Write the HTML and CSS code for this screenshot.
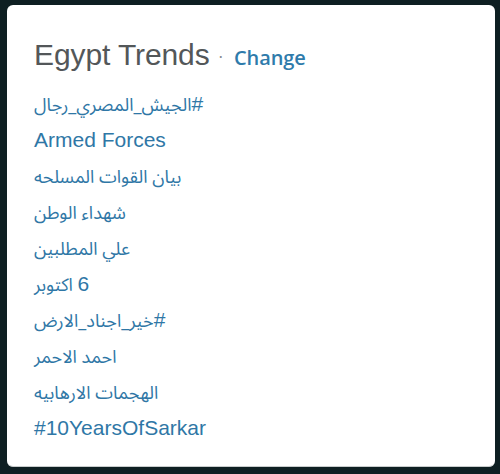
FILE: index.html
```html
<!DOCTYPE html>
<html lang="en">
<head>
<meta charset="utf-8">
<title>Egypt Trends</title>
<link rel="stylesheet" href="styles.css">
</head>
<body>
<div class="card">
  <h2 class="title">Egypt Trends <span class="sep">·</span> <a class="change" href="#">Change</a></h2>
  <ul class="trends">
    <li><a class="ar" href="#" dir="auto"><span class="hash">#</span>الجيش_المصري_رجال</a></li>
    <li><a href="#" dir="auto">Armed Forces</a></li>
    <li><a class="ar" href="#" dir="auto">بيان القوات المسلحه</a></li>
    <li><a class="ar" href="#" dir="auto">شهداء الوطن</a></li>
    <li><a class="ar" href="#" dir="auto">علي المطلبين</a></li>
    <li><a class="ar" href="#" dir="auto"><span class="num">6</span> اكتوبر</a></li>
    <li><a class="ar" href="#" dir="auto"><span class="hash">#</span>خير_اجناد_الارض</a></li>
    <li><a class="ar" href="#" dir="auto">احمد الاحمر</a></li>
    <li><a class="ar" href="#" dir="auto">الهجمات الارهابيه</a></li>
    <li><a href="#" dir="auto">#10YearsOfSarkar</a></li>
  </ul>
</div>
</body>
</html>
```

FILE: styles.css
```css
html, body {
  margin: 0;
  padding: 0;
  background: #0e1f22;
}
body {
  padding: 5px 5px 6px 7px;
  font-family: "Liberation Sans", "DejaVu Sans", sans-serif;
}
.card {
  box-sizing: border-box;
  width: 488px;
  height: 462px;
  background: #ffffff;
  border-radius: 6px;
  border-bottom: 1px solid #c8cccc;
  padding: 33px 0 0 27px;
}
.title {
  margin: 0;
  font-weight: normal;
  font-size: 30px;
  line-height: 34px;
  color: #535759;
  letter-spacing: -0.1px;
}
.sep {
  font-size: 18px;
  color: #8a8f91;
  margin: 0 2px 0 0;
  vertical-align: 3px;
}
.change {
  font-family: "Open Sans", "DejaVu Sans", sans-serif;
  font-size: 20px;
  font-weight: 600;
  color: #2f7bab;
  text-decoration: none;
}
.trends {
  list-style: none;
  margin: 11px 0 0 0;
  padding: 0;
}
.trends li {
  font-size: 21px;
  line-height: 36px;
  height: 36px;
  text-align: left;
}
.trends a {
  display: inline-block;
  color: #2f77a6;
  text-decoration: none;
  text-align: left;
  unicode-bidi: plaintext;
}
.trends a.ar {
  font-family: "Noto Sans Arabic", "DejaVu Sans", sans-serif;
  font-size: 18px;
}
.hash, .num {
  font-family: "Liberation Sans", sans-serif;
  font-size: 21px;
}
```
